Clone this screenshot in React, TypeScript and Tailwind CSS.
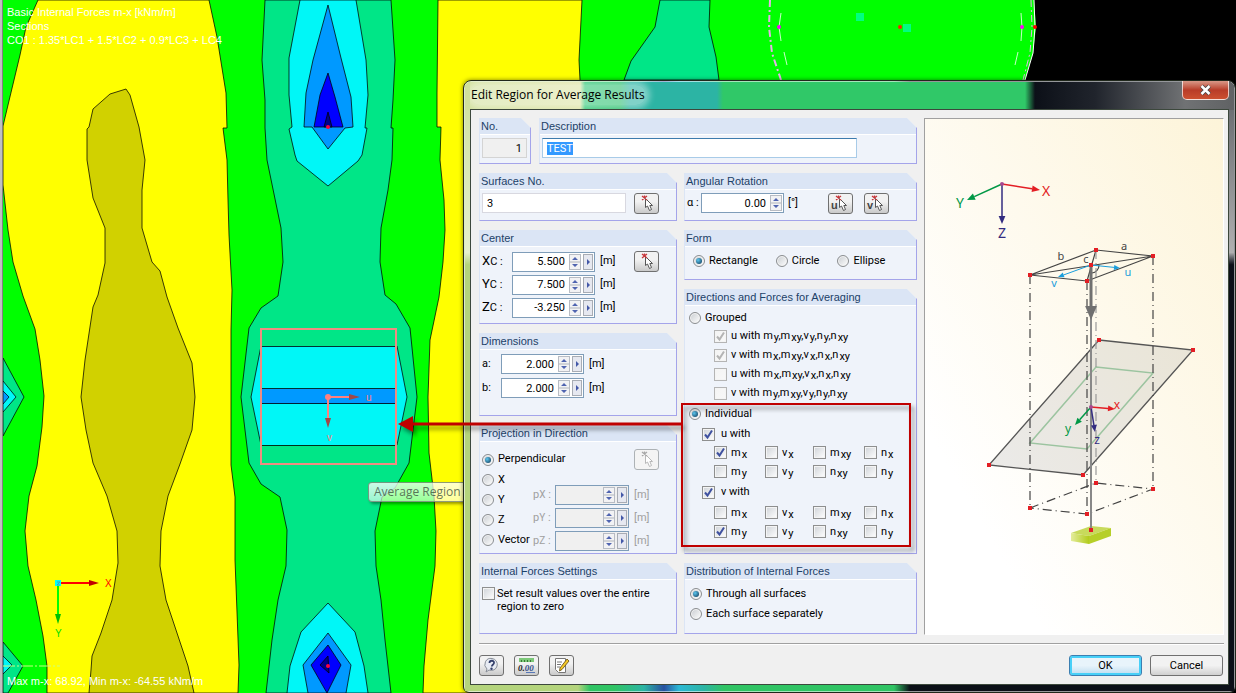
import { useEffect, useRef, type ReactNode } from "react";
import clsx from "clsx";

type Point = [number, number];

const line = "#000000";

// Contour bands of the m-x plot, painted from the outside in
const bands = [
  {
    fill: "#ffff00",
    d: "M38 0L26 27L20 55L8 105L3 126V185L8 230L13 262L23 296L35 329L40 360L44 396L42 427L37 466L29 496L25 531L28 566L36 600L43 636L47 666V693H238L239 665L237 612L235 560V497L231 465V330L232 290L229 235L228 200L227 160L223 128H227L226 93L217 37L209 0Z",
  },
  {
    fill: "#d1d100",
    d: "M126 89L110 94L93 109L89 127L87 129V160L93 198L105 228V263L98 295L93 307L85 360L81 397L86 430L93 463L107 496L117 531L118 563L112 600L101 633L92 656L91 670L89 693H194L188 666L177 633L166 600L160 566L161 531L168 496L180 464L192 430L195 397L192 363L178 328L167 297L160 271L152 262L142 228V190L145 160L139 127L130 95Z",
  },
  {
    fill: "#00e687",
    d: "M265 0L262 60L265 100V128L267 160L281 228L283 262L278 296L261 308L249 328L241 397L249 463L261 484L280 497L287 530L286 566L278 600L272 640L266 693H391L385 640L381 600L376 566L375 531L382 497L395 488L409 463L417 397L410 328L396 304L385 295L380 262L381 228L388 190L392 160L393 128H391L393 100L395 60L391 0Z",
  },
  {
    fill: "#00f7f7",
    d: "M300 0L289 58V95L292 127L289 129L295 155L297 161L328 186L358 161L362 155L367 128H365L368 95L366 60L356 0Z",
  },
  { fill: "#0099ff", d: "M328 5L313 60L306 93L304 127H312L328 149L345 128L353 127L351 97L341 58Z" },
  { fill: "#0000ff", d: "M328 73L320 95L314 127H343L335 97Z" },
  { fill: "#00008b", d: "M328 112L324 127H332Z" },
  { fill: "#00f7f7", d: "M261 346L251 397L261 445H397L407 397L397 346Z" },
  { fill: "#00f7f7", d: "M328 603L301 632L290 666L287 693H368L364 666L355 632Z" },
  { fill: "#0099ff", d: "M328 633L303 665L308 693H346L351 665Z" },
  { fill: "#0000ff", d: "M328 645L311 665L327 693L341 665Z" },
  { fill: "#00008b", d: "M328 656L320 665L329 673Z" },
  { fill: "#00e687", d: "M3 358L24 397L3 436Z" },
  { fill: "#00f7f7", d: "M3 381L16 397L3 412Z" },
  { fill: "#0099ff", d: "M3 391L9 397L3 404Z" },
  { fill: "#00e687", d: "M3 642L23 666L8 693H3Z" },
  { fill: "#00f7f7", d: "M3 656L12 665L3 674Z" },
  {
    fill: "#ffff00",
    d: "M438 0L437 93V127H441L440 160L444 200L445 230L443 262L439 297L430 340L428 397L429 453L434 496L436 531L435 566L428 620L424 666L423 693H580V80L579 60L582 0Z",
  },
  { fill: "#00e687", d: "M660 0L655 27L631 61L624 80H719L716 57L709 27L710 0Z" },
];

function Plot() {
  return (
    <svg className="absolute inset-0 h-full w-full" aria-hidden="true">
      <rect width="100%" height="100%" fill="#000" />
      <path d="M0 0H1034L1036 27L1033 53L1025 80V693H0Z" fill="#00ff00" />
      {bands.map((b, i) => (
        <path key={i} d={b.d} fill={b.fill} stroke={line} strokeOpacity={0.75} strokeWidth={1} />
      ))}
      <rect width="3" height="100%" fill="#c0c0c0" />
      <rect x="2" width="1" height="100%" fill="#808080" />

      {/* column outline, top right */}
      <path d="M1034 0L1035 27L1033 53L1025 80" fill="none" stroke="#fff" />
      <g fill="none" stroke="#e8b0e8" strokeDasharray="7 3 2 3">
        <path d="M770 0L769 27L772 53L781 80" strokeWidth="2" />
        <path d="M1031 0L1032 27L1030 53L1023 80" />
      </g>
      <path d="M781 13L779 27L781 41M784 52L787 65M1021 13L1022 27L1021 41M1018 52L1015 65" fill="none" stroke="#c8ffc8" />
      <rect x="856" y="13" width="8" height="8" fill="#00ff80" />
      <rect x="903" y="24" width="8" height="8" fill="#00ff80" />
      <circle cx="779" cy="27" r="2" fill="#ff00ff" />
      <circle cx="1022" cy="27" r="2" fill="#ff00ff" />
      <circle cx="900" cy="27" r="2" fill="#ff2000" />
      <circle cx="1035" cy="27" r="2" fill="#ff0000" />

      {/* averaging region */}
      <rect x="261" y="329" width="135" height="135" fill="#00e687" />
      <rect x="261" y="346" width="135" height="99" fill="#00f7f7" />
      <rect x="261" y="389" width="135" height="15" fill="#0099ff" />
      <path d="M262 346.500H396M262 388.500H396M262 403.500H396M262 445.500H396" stroke={line} strokeOpacity={0.8} />
      <rect x="261" y="329" width="135" height="135" fill="none" stroke="#f08c82" strokeWidth="2" />
      <path d="M328 397H350M328 397V420" stroke="#ff8080" strokeWidth="2" />
      <path d="M349 394L360 397L349 400ZM325 418L328 428L331 418Z" fill="#a04848" />
      <circle cx="328" cy="397" r="3" fill="#ff8080" />
      <g fill="#ff8080" fontFamily="'Liberation Sans', sans-serif" fontSize="10">
        <text x="366" y="401">u</text>
        <text x="327" y="441">v</text>
      </g>
      <circle cx="328" cy="127" r="2" fill="#ff0040" />
      <circle cx="328" cy="666" r="2" fill="#ff0040" />

      {/* global axes */}
      <path d="M3 666H60" stroke="#c8ff80" strokeDasharray="12 2 2 2" />
      <path d="M61 583H90" stroke="#ff0000" strokeWidth="2" />
      <path d="M89 580L99 583L89 586Z" fill="#c00000" />
      <path d="M58 586V616" stroke="#00ff00" strokeWidth="2" />
      <path d="M55 614L58 624L61 614Z" fill="#00c000" />
      <rect x="55" y="580" width="6" height="6" fill="#00ffff" />
      <path d="M57 582H60L57 585H60" fill="none" stroke="#40a0c0" />
      <g fontFamily="'Liberation Sans', sans-serif" fontSize="10">
        <text x="105" y="587" fill="#ff0000">X</text>
        <text x="55" y="637" fill="#00e000">Y</text>
      </g>
    </svg>
  );
}

function Panel({ title, className, children }: { title: string; className?: string; children: ReactNode }) {
  return (
    <section
      className={clsx(
        "border-r border-b border-l border-r-[#a4a4ea] border-b-[#a4a4ea] border-l-[#dbe5f5] bg-[#eff3fa] [clip-path:polygon(0_0,calc(100%-10px)_0,100%_10px,100%_100%,0_100%)]",
        className
      )}
    >
      <h2 className="h-[17px] border-b border-white bg-[#dbe5f5] pl-px font-[Liberation_Sans,sans-serif] text-[11px] leading-4 text-[#1c4168]">
        {title}
      </h2>
      {children}
    </section>
  );
}

function Radio({ name, label, checked }: { name: string; label: string; checked?: boolean }) {
  return (
    <label className="flex items-center gap-1 whitespace-nowrap">
      <span className="relative flex size-3 shrink-0">
        <input
          type="radio"
          name={name}
          defaultChecked={checked}
          className="peer size-3 appearance-none rounded-full border border-[#8a8d90] bg-linear-to-br from-[#c8ccd0] to-white shadow-[inset_0_0_0_1px_#f4f4f4]"
        />
        <span className="absolute top-[3px] left-[3px] hidden size-1.5 rounded-full bg-radial-[at_35%_35%] from-[#5cc8f0] to-[#0c3050] peer-checked:block" />
      </span>
      {label}
    </label>
  );
}

function Check({ children, checked, disabled, gap = "gap-1" }: { children: ReactNode; checked?: boolean; disabled?: boolean; gap?: string }) {
  return (
    <label className={clsx("flex items-center whitespace-nowrap", gap)}>
      <span className="relative flex size-[13px] shrink-0">
        <input
          type="checkbox"
          defaultChecked={checked}
          disabled={disabled}
          className="peer size-[13px] appearance-none border border-[#8e8f8f] bg-linear-to-br from-[#cfd3d8] to-white shadow-[inset_0_0_0_1px_#f4f4f4] disabled:border-[#b4b4b4] disabled:from-[#f4f4f4] disabled:to-[#f8f8f8]"
        />
        <svg viewBox="0 0 13 13" className={clsx("pointer-events-none absolute inset-0 hidden peer-checked:block", disabled ? "text-[#b4b4b4]" : "text-[#3f51a0]")}>
          <path d="M3 6.500L5.500 9.500L10 2.500" fill="none" stroke="currentColor" strokeWidth="2" />
        </svg>
      </span>
      {children}
    </label>
  );
}

// "m_xy" is drawn with its index lowered
function Sym({ text }: { text: string }) {
  const parts = text.split(",");
  return (
    <span className="leading-4">
      {parts.map((part, i) => {
        const [base, index] = part.split("_");
        return (
          <span key={i}>
            {base}
            <sub className="bottom-[-2px] ml-px text-[11px]">{index}</sub>
            {i < parts.length - 1 && ","}
          </span>
        );
      })}
    </span>
  );
}

function Spin({ label, value, width, arrow = true, disabled }: { label: string; value: string; width: string; arrow?: boolean; disabled?: boolean }) {
  return (
    <span className={clsx("flex h-5 items-center border border-[#7f9db9] pr-px", width, disabled ? "bg-[#f0f0f0]" : "bg-white")}>
      <input aria-label={label} defaultValue={value} disabled={disabled} className="h-full w-0 min-w-0 flex-1 bg-transparent pr-1 text-right outline-none" />
      <button type="button" aria-label={`Step ${label}`} disabled={disabled} className="h-4 w-3 shrink-0 border border-[#b8bcc4] bg-[#f2f2f4]">
        <svg viewBox="0 0 10 14" className="h-full w-full">
          <path d="M0 7H10" stroke="#b0b4bc" />
          <path d="M2 5L5 2L8 5ZM2 9L5 12L8 9Z" fill="#5064b0" />
        </svg>
      </button>
      {arrow && (
        <button type="button" aria-label={`More for ${label}`} disabled={disabled} className="ml-0.5 h-4 w-2.5 shrink-0 border border-[#a8acb4] bg-[#e6e8f0]">
          <svg viewBox="0 0 8 14" className="h-full w-full">
            <path d="M3 4L6 7L3 10Z" fill="#4458a8" />
          </svg>
        </button>
      )}
    </span>
  );
}

const toolButton =
  "flex h-[21px] w-[25px] shrink-0 items-center justify-center rounded-[3px] border border-[#707070] bg-linear-to-b from-[#f2f2f2] from-40% to-[#cacaca] disabled:border-[#adb2b5] disabled:from-[#f4f4f4] disabled:to-[#f4f4f4]";

function PickButton({ label, letter, disabled }: { label: string; letter?: string; disabled?: boolean }) {
  return (
    <button type="button" aria-label={label} disabled={disabled} className={toolButton}>
      <svg width="21" height="17" viewBox="0 0 21 17">
        {letter && (
          <text x="1" y="14" fontSize="11" fontWeight="bold" fontFamily="'Liberation Sans', sans-serif" fill="#444">
            {letter}
          </text>
        )}
        <path d="M9.500 3.500V12.500L11.500 11L13.500 15.500L15.500 14.500L13.800 10.500H16.500Z" fill="#fff" stroke={disabled ? "#b8b8b8" : "#555"} />
        <path d="M6 1L11 5M11 1L6 5M8.500 0.500V4" stroke={disabled ? "#a8a8a8" : "#c8383c"} strokeWidth="1.300" />
      </svg>
    </button>
  );
}

function Row({ label, children, unit }: { label: ReactNode; children: ReactNode; unit: string }) {
  return (
    <div className="flex items-center">
      {label}
      {children}
      <span className="ml-[5px]">{unit}</span>
    </div>
  );
}

const center = [
  { axis: "X", value: "5.500" },
  { axis: "Y", value: "7.500" },
  { axis: "Z", value: "-3.250" },
];

const grouped = [
  { dir: "u", symbols: "m_y,m_xy,v_y,n_y,n_xy", on: true },
  { dir: "v", symbols: "m_x,m_xy,v_x,n_x,n_xy", on: true },
  { dir: "u", symbols: "m_x,m_xy,v_x,n_x,n_xy", on: false },
  { dir: "v", symbols: "m_y,m_xy,v_y,n_y,n_xy", on: false },
];

const forces = ["m_x", "v_x", "m_xy", "n_x", "m_y", "v_y", "n_xy", "n_y"];

function ForceGrid({ selected }: { selected: string }) {
  return (
    <div className="ml-[29px] grid auto-rows-[19px] grid-cols-[51px_48px_51px_45px] items-center">
      {forces.map((f) => (
        <Check key={f} checked={f === selected}>
          <Sym text={f} />
        </Check>
      ))}
    </div>
  );
}

function Arrow({ from, to, color, width = 1, head = 7 }: { from: Point; to: Point; color: string; width?: number; head?: number }) {
  const angle = Math.atan2(to[1] - from[1], to[0] - from[0]);
  const bx = to[0] - head * Math.cos(angle);
  const by = to[1] - head * Math.sin(angle);
  const sx = head * 0.42 * Math.sin(angle);
  const sy = head * 0.42 * Math.cos(angle);
  return (
    <g>
      <path d={`M${from[0]} ${from[1]}L${bx} ${by}`} stroke={color} strokeWidth={width} />
      <path d={`M${to[0]} ${to[1]}L${bx + sx} ${by - sy}L${bx - sx} ${by + sy}Z`} fill={color} />
    </g>
  );
}

const nodes: Point[] = [
  [172, 132], [229, 138], [163, 163], [106, 157], [167, 147],
  [175, 222], [269, 232], [159, 357], [65, 347],
  [172, 365], [229, 371], [163, 396], [106, 390], [167, 412],
];

function Diagram() {
  return (
    <svg viewBox="1 1 298 515" className="h-full w-full" preserveAspectRatio="xMinYMin meet" role="img" aria-label="Region projected on a surface">
      <defs>
        <linearGradient id="block">
          <stop offset="0" stopColor="#e4ec9c" />
          <stop offset="1" stopColor="#b2cc1c" />
        </linearGradient>
      </defs>
      <Arrow from={[78, 66]} to={[116, 72]} color="#e31e24" width={1.5} head={8} />
      <Arrow from={[78, 66]} to={[43, 82]} color="#009846" width={1.5} head={8} />
      <Arrow from={[78, 66]} to={[78, 106]} color="#332c80" width={1.5} head={8} />
      <circle cx="78" cy="66" r="2" fill="#a84890" />
      <g fill="none" stroke="#444" strokeWidth="1.200">
        <path d="M172 132L229 138L163 163L106 157ZM106 157L229 138M172 132L163 163" />
        <path d="M175 147A8 8 0 0 1 168 155" />
      </g>
      <path d="M175 222L269 232L159 357L65 347Z" fill="#9c9c9c" fillOpacity="0.200" stroke="#555" strokeWidth="1.300" />
      <path d="M172 249L229 255L163 331L106 325Z" fill="none" stroke="#9cc4a0" strokeWidth="1.500" />
      <g fill="none" stroke="#444" strokeWidth="1.200" strokeDasharray="9 4 1 4">
        <path d="M106 157V390M163 163V396M229 138V371" />
        <path d="M172 132V365" stroke="#999" />
        <path d="M106 390L172 365L229 371L163 396Z" />
      </g>
      <path d="M147 415L167 408L187 410L165 418Z" fill="#c8da5c" />
      <path d="M147 415L165 418V426L147 423Z" fill="url(#block)" />
      <path d="M165 418L187 410V418L165 426Z" fill="#b6cf28" />
      <path d="M167 190V412" stroke="#888" strokeWidth="2" />
      <Arrow from={[167, 147]} to={[167, 202]} color="#707070" width={3} head={14} />
      <Arrow from={[167, 147]} to={[196, 150]} color="#1a9edc" head={6} />
      <Arrow from={[167, 147]} to={[134, 159]} color="#1a9edc" head={6} />
      <Arrow from={[167, 289]} to={[191, 291]} color="#e31e24" width={1.5} />
      <Arrow from={[167, 289]} to={[151, 307]} color="#009846" width={1.5} />
      <Arrow from={[167, 289]} to={[171, 314]} color="#332c80" width={1.5} />
      <circle cx="167" cy="289" r="2" fill="#a84890" />
      {nodes.map(([x, y]) => (
        <rect key={`${x}-${y}`} x={x - 2} y={y - 2} width="4" height="4" fill="#e31e24" />
      ))}
      <g fontFamily="'Noto Sans', sans-serif" textAnchor="middle">
        <g fontSize="14">
          <text x="122" y="78" fill="#e31e24">X</text>
          <text x="36" y="90" fill="#009846">Y</text>
          <text x="78" y="120" fill="#332c80">Z</text>
          <text x="193" y="291" fill="#e31e24" fontSize="12">x</text>
          <text x="144" y="315" fill="#009846" fontSize="12">y</text>
          <text x="173" y="326" fill="#332c80" fontSize="12">z</text>
        </g>
        <g fontSize="11" fill="#444">
          <text x="137" y="142">b</text>
          <text x="200" y="132">a</text>
          <text x="162" y="145">c</text>
        </g>
        <g fontSize="11" fill="#1a9edc">
          <text x="204" y="158">u</text>
          <text x="130" y="169">v</text>
        </g>
      </g>
    </svg>
  );
}

export default function App() {
  const description = useRef<HTMLInputElement>(null);

  useEffect(() => {
    description.current?.focus();
    description.current?.select();
  }, []);

  return (
    <main className="relative min-h-screen w-full overflow-hidden font-[Roboto,sans-serif] text-[11px] text-black">
      <Plot />

      <div className="absolute top-[5px] left-[7px] font-[Liberation_Sans,sans-serif] leading-[14px] text-white">
        <p>Basic Internal Forces m-x [kNm/m]</p>
        <p>Sections</p>
        <p>CO1 : 1.35*LC1 + 1.5*LC2 + 0.9*LC3 + LC4</p>
      </div>
      <p className="absolute bottom-[5px] left-[7px] font-[Liberation_Sans,sans-serif] leading-[14px] text-white">
        Max m-x: 68.92, Min m-x: -64.55 kNm/m
      </p>
      <div className="absolute top-[482px] left-[368px] rounded-sm border border-[#607060]/70 bg-linear-to-b from-white/80 to-white/60 px-[5px] font-[Open_Sans,sans-serif] text-xs leading-[18px] whitespace-nowrap text-[#405040]/80 shadow-[2px_2px_3px_#0006]">
        Average Region No. 1
      </div>

      {/* Dialog window */}
      <div className="absolute top-20 right-0 left-[463px] rounded-t-lg rounded-b-md border border-[#20281c] bg-[linear-gradient(90deg,#b4d47c_0,#b4d47c_114px,#30c464_126px,#30c464_150px,#2cb4a4_180px,#2850a0_200px,#2cb8d4_215px,#2cb4a4_240px,#30c464_260px,#30c464_430px,#0c1018_446px)] px-1.5 pb-[7px] shadow-[inset_0_0_0_1px_#ffffff90,0_0_4px_#0008]">
        <div className="absolute inset-y-px left-px w-[6px] rounded-tl-lg bg-linear-to-b from-[#cfe09c] via-[#e6f0cc] via-28% to-[#b4d47c] to-30%" />
        <div className="absolute inset-y-px right-px w-[6px] rounded-tr-lg bg-linear-to-b from-[#606468] via-[#b0b0b0] via-28% to-[#0c1018] to-30%" />
        <div className="absolute inset-x-px top-px h-7 rounded-t-md bg-[linear-gradient(90deg,#d0e09c_0,#dde4a4_115px,#30c878_120px,#30c070_155px,#2cb4a4_165px,#2cb4a4_252px,#30c868_258px,#30c868_560px,#0c1018_570px,#20242c_630px,#707274_720px,#606264_100%)]" />

        <header className="relative flex h-7 items-start justify-between overflow-hidden">
          <h1 className="mt-1 rounded-full bg-white/40 px-px font-[Open_Sans,sans-serif] text-xs leading-5 shadow-[0_0_6px_4px_#ffffff66]">Edit Region for Average Results</h1>
          <button
            type="button"
            aria-label="Close"
            className="flex h-[19px] w-[47px] items-center justify-center rounded-b-[5px] border border-t-0 border-white/70 bg-linear-to-b from-[#d89888] from-0% via-[#b83c28] via-50% to-[#cc5030]"
          >
            <svg width="13" height="12" viewBox="0 0 13 12">
              <path d="M2.500 2L10.500 10M10.500 2L2.500 10" stroke="#444" strokeWidth="4" />
              <path d="M2.500 2L10.500 10M10.500 2L2.500 10" stroke="#fff" strokeWidth="2.500" />
            </svg>
          </button>
        </header>

        <div className="relative border border-[#3c483c] bg-[#f0f0f0] pt-2 pr-1 pb-2 pl-2">
          <div className="flex gap-[7px]">
            <div className="flex w-[438px] shrink-0 flex-col gap-[9px]">
              <div className="flex gap-2">
                <Panel title="No." className="w-[52px] pb-[5px]">
                  <input aria-label="No." readOnly defaultValue="1" className="mt-[3px] ml-0.5 h-5 w-[45px] border border-[#d4d4d4] bg-[#f0f0f0] pr-1 text-right" />
                </Panel>
                <Panel title="Description" className="min-w-0 flex-1">
                  <input
                    ref={description}
                    aria-label="Description"
                    defaultValue="TEST"
                    className="mt-[3px] ml-0.5 h-5 w-[315px] border border-[#a8cbe8] border-t-[#3d7bad] bg-white px-1 outline-none selection:bg-[#3399ff] selection:text-white"
                  />
                </Panel>
              </div>

              <div className="flex gap-[7px]">
                <div className="flex w-[198px] shrink-0 flex-col gap-[9px]">
                  <Panel title="Surfaces No." className="h-12">
                    <div className="flex items-start gap-2 pt-[3px] pl-0.5">
                      <input aria-label="Surfaces No." defaultValue="3" className="h-5 w-36 border border-[#d8d8e0] bg-white px-1" />
                      <PickButton label="Pick surfaces" />
                    </div>
                  </Panel>

                  <Panel title="Center" className="h-[94px]">
                    <div className="flex items-start justify-between pt-1 pr-[17px] pl-0.5">
                      <div className="flex flex-col gap-0.5">
                        {center.map((c) => (
                          <Row
                            key={c.axis}
                            unit="[m]"
                            label={
                              <span className="w-[30px] text-[13px] leading-5">
                                {c.axis}
                                <span className="text-[11px]">C :</span>
                              </span>
                            }
                          >
                            <Spin label={`${c.axis} center`} value={c.value} width="w-[83px]" />
                          </Row>
                        ))}
                      </div>
                      <PickButton label="Pick center" />
                    </div>
                  </Panel>

                  <Panel title="Dimensions" className="h-[83px]">
                    <div className="flex flex-col gap-1 pt-1 pl-0.5">
                      {["a", "b"].map((side) => (
                        <Row key={side} label={<span className="w-[19px]">{side}:</span>} unit="[m]">
                          <Spin label={`Side ${side}`} value="2.000" width="w-[83px]" />
                        </Row>
                      ))}
                    </div>
                  </Panel>

                  <Panel title="Projection in Direction" className="h-[129px]">
                    <div className="flex items-center justify-between pt-[7px] pr-[17px] pl-0.5">
                      <Radio name="projection" label="Perpendicular" checked />
                      <PickButton label="Pick direction" disabled />
                    </div>
                    <div className="flex pl-0.5">
                      <div className="flex w-[51px] shrink-0 flex-col">
                        {["X", "Y", "Z", "Vector"].map((d) => (
                          <div key={d} className="flex h-5 items-center">
                            <Radio name="projection" label={d} />
                          </div>
                        ))}
                      </div>
                      <div className="flex flex-col gap-[3px] pt-[15px] text-[#a0a0a0]">
                        {["X", "Y", "Z"].map((d) => (
                          <Row key={d} label={<span className="w-[22px]">p<span className="text-[10px]">{d}</span> :</span>} unit="[m]">
                            <Spin label={`p ${d}`} value="" width="w-[74px]" disabled />
                          </Row>
                        ))}
                      </div>
                    </div>
                  </Panel>

                  <Panel title="Internal Forces Settings" className="h-[71px]">
                    <div className="pt-[7px] pl-0.5 leading-[13px]">
                      <label className="flex items-start gap-0.5">
                        <input
                          type="checkbox"
                          className="size-[13px] shrink-0 appearance-none border border-[#8e8f8f] bg-linear-to-br from-[#cfd3d8] to-white shadow-[inset_0_0_0_1px_#f4f4f4]"
                        />
                        <span>
                          Set result values over the entire
                          <br />
                          region to zero
                        </span>
                      </label>
                    </div>
                  </Panel>
                </div>

                <div className="flex min-w-0 flex-1 flex-col gap-[9px]">
                  <Panel title="Angular Rotation" className="h-12">
                    <div className="flex items-start pt-[3px] pl-0.5 leading-5">
                      <span className="w-3.5 whitespace-nowrap">α :</span>
                      <Spin label="Rotation angle" value="0.00" width="w-[83px]" arrow={false} />
                      <span className="ml-1 w-10">[°]</span>
                      <div className="flex gap-[11px]">
                        <PickButton label="Pick u axis" letter="u" />
                        <PickButton label="Pick v axis" letter="v" />
                      </div>
                    </div>
                  </Panel>

                  <Panel title="Form" className="h-[50px]">
                    <div className="flex gap-[18px] pt-1.5 pl-2 leading-4">
                      <Radio name="form" label="Rectangle" checked />
                      <Radio name="form" label="Circle" />
                      <Radio name="form" label="Ellipse" />
                    </div>
                  </Panel>

                  <Panel title="Directions and Forces for Averaging" className="h-[265px]">
                    <div className="flex flex-col pt-[3px]">
                      <div className="flex h-[18px] items-center pl-1">
                        <Radio name="averaging" label="Grouped" />
                      </div>
                      {grouped.map((g, i) => (
                        <div key={i} className="flex h-[19px] items-center pl-[29px]">
                          <Check checked={g.on} disabled>
                            <span>
                              {g.dir} with <Sym text={g.symbols} />
                            </span>
                          </Check>
                        </div>
                      ))}
                      <div className="flex h-[22px] items-center pl-1">
                        <Radio name="averaging" label="Individual" checked />
                      </div>
                      <div className="flex h-[18px] items-center pl-[17px]">
                        <Check checked gap="gap-1.5">u with</Check>
                      </div>
                      <ForceGrid selected="m_x" />
                      <div className="flex h-[22px] items-center pl-[17px]">
                        <Check checked gap="gap-1.5">v with</Check>
                      </div>
                      <ForceGrid selected="m_y" />
                    </div>
                  </Panel>

                  <Panel title="Distribution of Internal Forces" className="h-[71px]">
                    <div className="flex flex-col gap-1 pt-1.5 pl-[5px] leading-4">
                      <Radio name="distribution" label="Through all surfaces" checked />
                      <Radio name="distribution" label="Each surface separately" />
                    </div>
                  </Panel>
                </div>
              </div>
            </div>

            <div className="min-w-0 flex-1 border border-[#a0a0a0] border-r-white border-b-white bg-linear-to-tr from-white from-20% to-[#fdf4d9]">
              <Diagram />
            </div>
          </div>

          <hr className="mt-2 h-0.5 border-t border-b border-t-[#a0a0a0] border-b-white" />

          <footer className="flex items-center justify-between pt-2.5 pr-px">
            <div className="flex gap-2.5">
              <button type="button" aria-label="Help" className={toolButton}>
                <svg width="17" height="17" viewBox="0 0 17 17">
                  <path d="M9 1.500A6 6 0 1 1 6 13L3 15L4 12A6 6 0 0 1 9 1.500Z" fill="#e8ecf4" stroke="#888e98" />
                  <path d="M6.500 6C6.500 3 11.500 3 11 6C10.800 7.500 9 7.500 8.800 9.500" fill="none" stroke="#34406c" strokeWidth="1.800" />
                  <circle cx="8.500" cy="11.800" r="1.200" fill="#34406c" />
                </svg>
              </button>
              <button type="button" aria-label="Units and decimal places" className={toolButton}>
                <svg width="19" height="17" viewBox="0 0 19 17">
                  <rect x="2" y="1" width="15" height="4" fill="#7cc878" />
                  <path d="M4.500 3V5M7.500 3V5M10.500 3V5M13.500 3V5" stroke="#387838" />
                  <text x="1" y="14" fontSize="9" fontWeight="bold" fontStyle="italic" fontFamily="'Liberation Serif', serif" fill="#222">
                    0.<tspan fill="#34508c">00</tspan>
                  </text>
                  <path d="M9 15.500H18" stroke="#5878b8" />
                </svg>
              </button>
              <button type="button" aria-label="Comment" className={toolButton}>
                <svg width="17" height="17" viewBox="0 0 17 17">
                  <path d="M2.500 1.500H12.500V15.500H5.500L2.500 12.500Z" fill="#fff" stroke="#777" />
                  <path d="M4 5H9M4 7.500H8M4 10H7" stroke="#777" />
                  <path d="M7 11L14 2L16 4L9 12.500L6.500 14Z" fill="#f4c828" stroke="#604810" strokeWidth="0.800" />
                </svg>
              </button>
            </div>
            <div className="flex gap-2">
              <button
                type="button"
                className="h-[21px] w-[73px] rounded-[3px] border border-[#3c7fb1] bg-linear-to-b from-[#e8f4fb] from-50% to-[#bcdcf0] leading-4 shadow-[inset_0_0_0_2px_#48d0f8]"
              >
                OK
              </button>
              <button type="button" className="h-[21px] w-[73px] rounded-[3px] border border-[#707070] bg-linear-to-b from-[#f2f2f2] from-50% to-[#d0d0d0] leading-4">
                Cancel
              </button>
            </div>
          </footer>
        </div>
      </div>

      {/* Callout from the force selection to the region in the plot */}
      <svg className="pointer-events-none absolute inset-0 h-full w-full drop-shadow-[3px_4px_2px_#00000070]" aria-hidden="true">
        <rect x="682" y="404" width="228" height="142" fill="none" stroke="#c00000" strokeWidth="2" />
        <path d="M681 424H410" stroke="#c00000" strokeWidth="3" />
        <path d="M398 424L413 416V432Z" fill="#c00000" />
      </svg>
    </main>
  );
}
